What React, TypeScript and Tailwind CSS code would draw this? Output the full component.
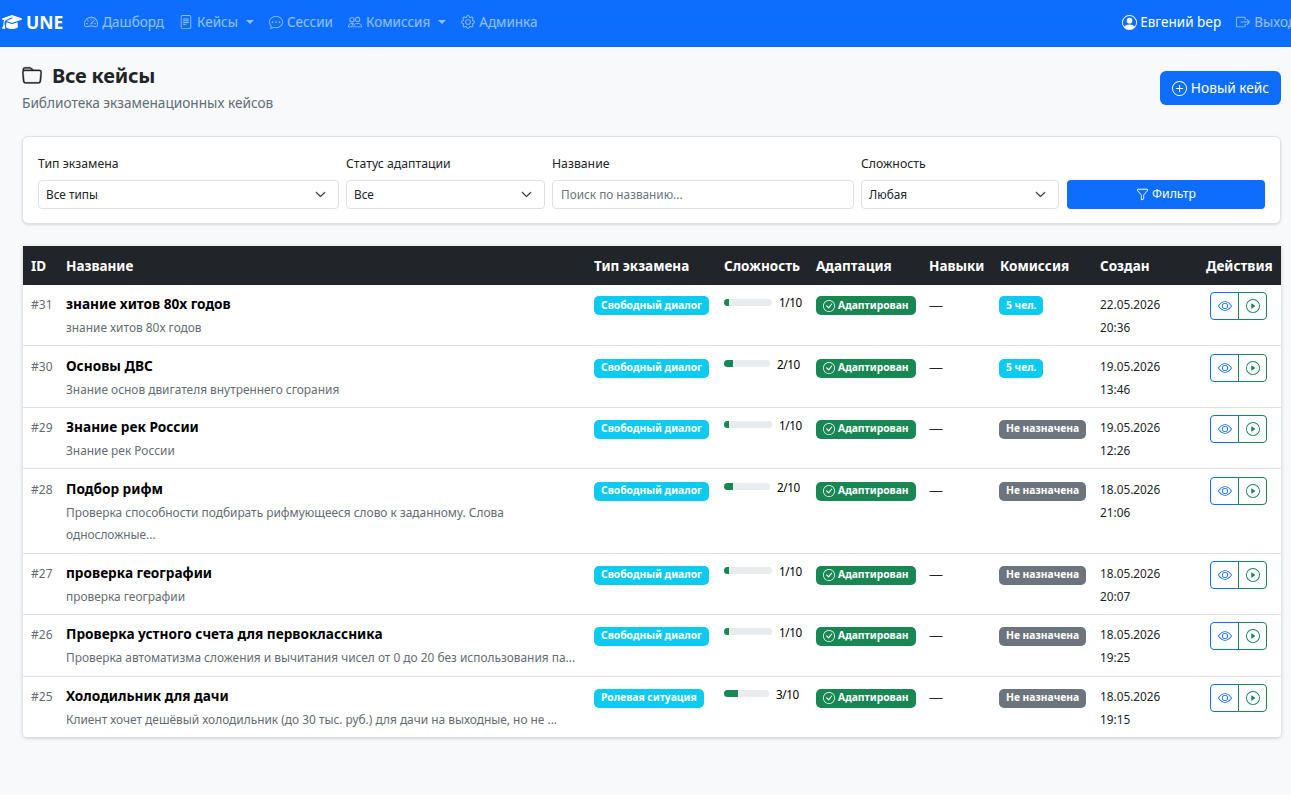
import React from "react";
import {
  BsSpeedometer2, BsFileText, BsChatDots, BsPeople, BsGear,
  BsPersonCircle, BsBoxArrowRight, BsFolder, BsPlusCircle, BsFunnel, BsChevronDown,
  BsCheckCircle, BsEye, BsPlayCircle,
} from "react-icons/bs";
import { FaGraduationCap } from "react-icons/fa6";

type Row = {
  id: number; name: string; desc: React.ReactNode; type: string; level: number;
  barW: string; fillW: string; team: string; date: string; time: string; h: string;
};

const rows: Row[] = [
  { id: 31, name: "знание хитов 80х годов", desc: "знание хитов 80х годов", type: "Свободный диалог", level: 1, barW: "w-[48px]", fillW: "w-[5px]", team: "5 чел.", date: "22.05.2026", time: "20:36", h: "h-[60px]" },
  { id: 30, name: "Основы ДВС", desc: "Знание основ двигателя внутреннего сгорания", type: "Свободный диалог", level: 2, barW: "w-[46px]", fillW: "w-[9px]", team: "5 чел.", date: "19.05.2026", time: "13:46", h: "h-[62px]" },
  { id: 29, name: "Знание рек России", desc: "Знание рек России", type: "Свободный диалог", level: 1, barW: "w-[48px]", fillW: "w-[5px]", team: "Не назначена", date: "19.05.2026", time: "12:26", h: "h-[61px]" },
  { id: 28, name: "Подбор рифм", desc: <>Проверка способности подбирать рифмующееся слово к заданному. Слова<br />односложные...</>, type: "Свободный диалог", level: 2, barW: "w-[46px]", fillW: "w-[9px]", team: "Не назначена", date: "18.05.2026", time: "21:06", h: "h-[85px]" },
  { id: 27, name: "проверка географии", desc: "проверка географии", type: "Свободный диалог", level: 1, barW: "w-[48px]", fillW: "w-[5px]", team: "Не назначена", date: "18.05.2026", time: "20:07", h: "h-[61px]" },
  { id: 26, name: "Проверка устного счета для первоклассника", desc: "Проверка автоматизма сложения и вычитания чисел от 0 до 20 без использования па...", type: "Свободный диалог", level: 1, barW: "w-[48px]", fillW: "w-[5px]", team: "Не назначена", date: "18.05.2026", time: "19:25", h: "h-[62px]" },
  { id: 25, name: "Холодильник для дачи", desc: "Клиент хочет дешёвый холодильник (до 30 тыс. руб.) для дачи на выходные, но не ...", type: "Ролевая ситуация", level: 3, barW: "w-[45px]", fillW: "w-[14px]", team: "Не назначена", date: "18.05.2026", time: "19:15", h: "h-[61px]" },
];

// Top padding per cell kind; even-numbered rows sit one pixel lower in the reference.
const pad = {
  id: ["pt-[10px]", "pt-[11px]"],
  name: ["pt-[8px]", "pt-[9px]"],
  badge: ["pt-[12px]", "pt-[13px]"],
  bar: ["pt-[8px]", "pt-[9px]"],
  dash: ["pt-[9px]", "pt-[10px]"],
  date: ["pt-[8px]", "pt-[9px]"],
  actions: ["pt-[7px]", "pt-[8px]"],
};

function NavItem({ icon, label, caret }: { icon: React.ReactNode; label: string; caret?: boolean }) {
  return (
    <a className="flex items-center gap-[4px] text-white/55 text-[13.5px]">
      {icon}
      <span>{label}</span>
      {caret && <span className="ml-[4px] mb-[1px] border-x-[4px] border-t-[4px] border-x-transparent border-t-white/55" />}
    </a>
  );
}

function Select({ label, value, width }: { label: string; value: string; width: string }) {
  return (
    <div className={`${width} shrink-0`}>
      <div className="text-[12.25px] leading-[20px] text-[#212529] mb-[6px]">{label}</div>
      <div className="h-[29px] border border-[#dee2e6] rounded-[4px] bg-white flex items-center justify-between pl-[7px] pr-[12px] text-[11.8px] text-[#212529]">
        <span>{value}</span>
        <BsChevronDown className="text-[11px]" style={{ strokeWidth: 0.8 }} stroke="currentColor" />
      </div>
    </div>
  );
}

const th = "px-[8px] pt-[1px] text-left font-bold text-[13.5px] text-white whitespace-nowrap";

function Badge({ color, children, first }: { color: string; children: React.ReactNode; first: boolean }) {
  return (
    <span className={`${color} ${first ? "-mt-px" : ""} flex w-fit items-center h-[19px] rounded-[5px] px-[7px] text-[10.3px] font-bold text-white whitespace-nowrap`}>
      {children}
    </span>
  );
}

export default function App() {
  return (
    <div className="min-h-[795px] w-full overflow-hidden bg-[#f8f9fa] text-[#212529] [font-family:'Noto_Sans','Open_Sans',sans-serif]">
      <nav className="h-[47px] bg-[#0d6efd] flex items-center w-[1296px] pl-[2px] pb-[3px] whitespace-nowrap">
        <div className="flex items-center gap-[4px] text-white font-bold text-[17.5px] mr-[21px]">
          <FaGraduationCap className="text-[20px]" />
          <span>UNE</span>
        </div>
        <div className="flex items-center gap-[15px]">
          <NavItem icon={<BsSpeedometer2 className="text-[14px]" />} label="Дашборд" />
          <NavItem icon={<BsFileText className="text-[14px]" />} label="Кейсы" caret />
          <NavItem icon={<BsChatDots className="text-[14px]" />} label="Сессии" />
          <NavItem icon={<BsPeople className="text-[14px]" />} label="Комиссия" caret />
          <NavItem icon={<BsGear className="text-[14px]" />} label="Админка" />
        </div>
        <div className="ml-auto flex items-center gap-[15px]">
          <span className="flex items-center gap-[3px] text-white text-[13.5px]"><BsPersonCircle className="text-[15px]" />Евгений bep</span>
          <NavItem icon={<BsBoxArrowRight className="text-[14px]" />} label="Выход" />
        </div>
      </nav>

      <main className="px-[22px] pt-[14px]">
        <div className="flex items-start justify-between w-[1259px]">
          <div>
            <div className="flex items-center gap-[10px] h-[30px]">
              <BsFolder className="text-[20px] text-[#212529]" stroke="currentColor" style={{ strokeWidth: 0.3 }} />
              <h1 className="text-[20px] font-bold leading-[30px] tracking-[-0.2px]">Все кейсы</h1>
            </div>
            <p className="mt-[2px] text-[13.65px] leading-[20px] text-[#646c73]">Библиотека экзаменационных кейсов</p>
          </div>
          <button className="mt-[10px] h-[34px] w-[121px] shrink-0 whitespace-nowrap rounded-[6px] bg-[#0d6efd] text-white text-[13.7px] flex items-center justify-center gap-[4px]">
            <BsPlusCircle className="text-[15px]" />Новый кейс
          </button>
        </div>

        <section className="mt-[23px] h-[88px] w-[1259px] rounded-[6px] border border-[#dee2e6] bg-white shadow-sm flex items-start gap-[7px] pl-[15px] pt-[17px]">
          <Select label="Тип экзамена" value="Все типы" width="w-[301px]" />
          <Select label="Статус адаптации" value="Все" width="w-[199px]" />
          <div className="w-[302px] shrink-0">
            <div className="text-[12.25px] leading-[20px] text-[#212529] mb-[6px]">Название</div>
            <div className="h-[29px] border border-[#dee2e6] rounded-[4px] bg-white flex items-center pl-[8px] text-[11.8px] text-[#6c757d]">Поиск по названию...</div>
          </div>
          <Select label="Сложность" value="Любая" width="w-[198px]" />
          <button className="mt-[26px] ml-[1px] h-[29px] w-[198px] rounded-[4px] bg-[#0d6efd] text-white text-[12.25px] flex items-center justify-center gap-[3px]">
            <BsFunnel className="text-[13px]" />Фильтр
          </button>
        </section>

        <div className="mt-[22px] ml-[1px] w-[1258px] bg-white shadow-[0_1px_4px_rgba(0,0,0,0.2)] rounded-b-[4px] overflow-hidden">
          <table className="w-full table-fixed border-collapse">
            <colgroup>
              <col className="w-[35px]" /><col className="w-[528px]" /><col className="w-[130px]" /><col className="w-[92px]" />
              <col className="w-[113px]" /><col className="w-[71px]" /><col className="w-[100px]" /><col className="w-[106px]" /><col className="w-[83px]" />
            </colgroup>
            <thead>
              <tr className="h-[39px] bg-[#212529]">
                <th className={th}>ID</th><th className={th}>Название</th><th className={th}>Тип экзамена</th><th className={th}>Сложность</th>
                <th className={th}>Адаптация</th><th className={th}>Навыки</th><th className={th}>Комиссия</th><th className={th}>Создан</th><th className={th}>Действия</th>
              </tr>
            </thead>
            <tbody>
              {rows.map((r, i) => {
                const s = i === 1 || i === 3 ? 1 : 0;
                const first = i === 0;
                return (
                  <tr key={r.id} className={`${r.h} ${i < rows.length - 1 ? "border-b border-[#dee2e6]" : ""} align-top`}>
                    <td className={`pl-[8px] ${pad.id[s]} text-[12px] leading-[19px] text-[#646c73]`}>#{r.id}</td>
                    <td className={`pl-[8px] ${pad.name[s]} whitespace-nowrap`}>
                      <div className="text-[13.65px] leading-[21px] font-bold text-black">{r.name}</div>
                      <div className="mt-[2px] text-[11.9px] leading-[22px] text-[#646c73]">{r.desc}</div>
                    </td>
                    <td className={`pl-[8px] ${pad.badge[s]}`}><Badge first={first} color="bg-[#0dcaf0]">{r.type}</Badge></td>
                    <td className={`pl-[8px] ${pad.bar[s]}`}>
                      <div className="flex items-center gap-[7px] pr-[6px]">
                        <div className={`${r.barW} h-[7px] shrink-0 rounded-full bg-[#e9ecef] overflow-hidden`}>
                          <div className={`${r.fillW} h-full bg-[#198754]`} />
                        </div>
                        <span className="text-[11.7px] leading-[18px] tracking-[-0.4px] text-black">{r.level}/10</span>
                      </div>
                    </td>
                    <td className={`pl-[8px] ${pad.badge[s]}`}>
                      <Badge first={first} color="bg-[#198754]"><BsCheckCircle className="text-[12px] mr-[3px]" />Адаптирован</Badge>
                    </td>
                    <td className={`pl-[8px] ${pad.dash[s]} text-[14px] font-light leading-[21px] text-[#212529]`}>—</td>
                    <td className={`pl-[7px] ${pad.badge[s]}`}><Badge first={first} color={r.team === "5 чел." ? "bg-[#0dcaf0]" : "bg-[#6c757d]"}>{r.team}</Badge></td>
                    <td className={`pl-[8px] ${pad.date[s]} text-[11.8px] leading-[23px] text-[#212529]`}>{r.date}<br />{r.time}</td>
                    <td className={`pl-[12px] ${pad.actions[s]}`}>
                      <div className="flex h-[28px] w-[57px]">
                        <span className="w-[29px] border border-[#0d6efd] rounded-l-[4px] flex items-center justify-center text-[#0d6efd]"><BsEye className="text-[14px]" /></span>
                        <span className="w-[29px] -ml-px border border-[#198754] rounded-r-[4px] flex items-center justify-center text-[#198754]"><BsPlayCircle className="text-[14px]" /></span>
                      </div>
                    </td>
                  </tr>
                );
              })}
            </tbody>
          </table>
        </div>
      </main>
    </div>
  );
}
